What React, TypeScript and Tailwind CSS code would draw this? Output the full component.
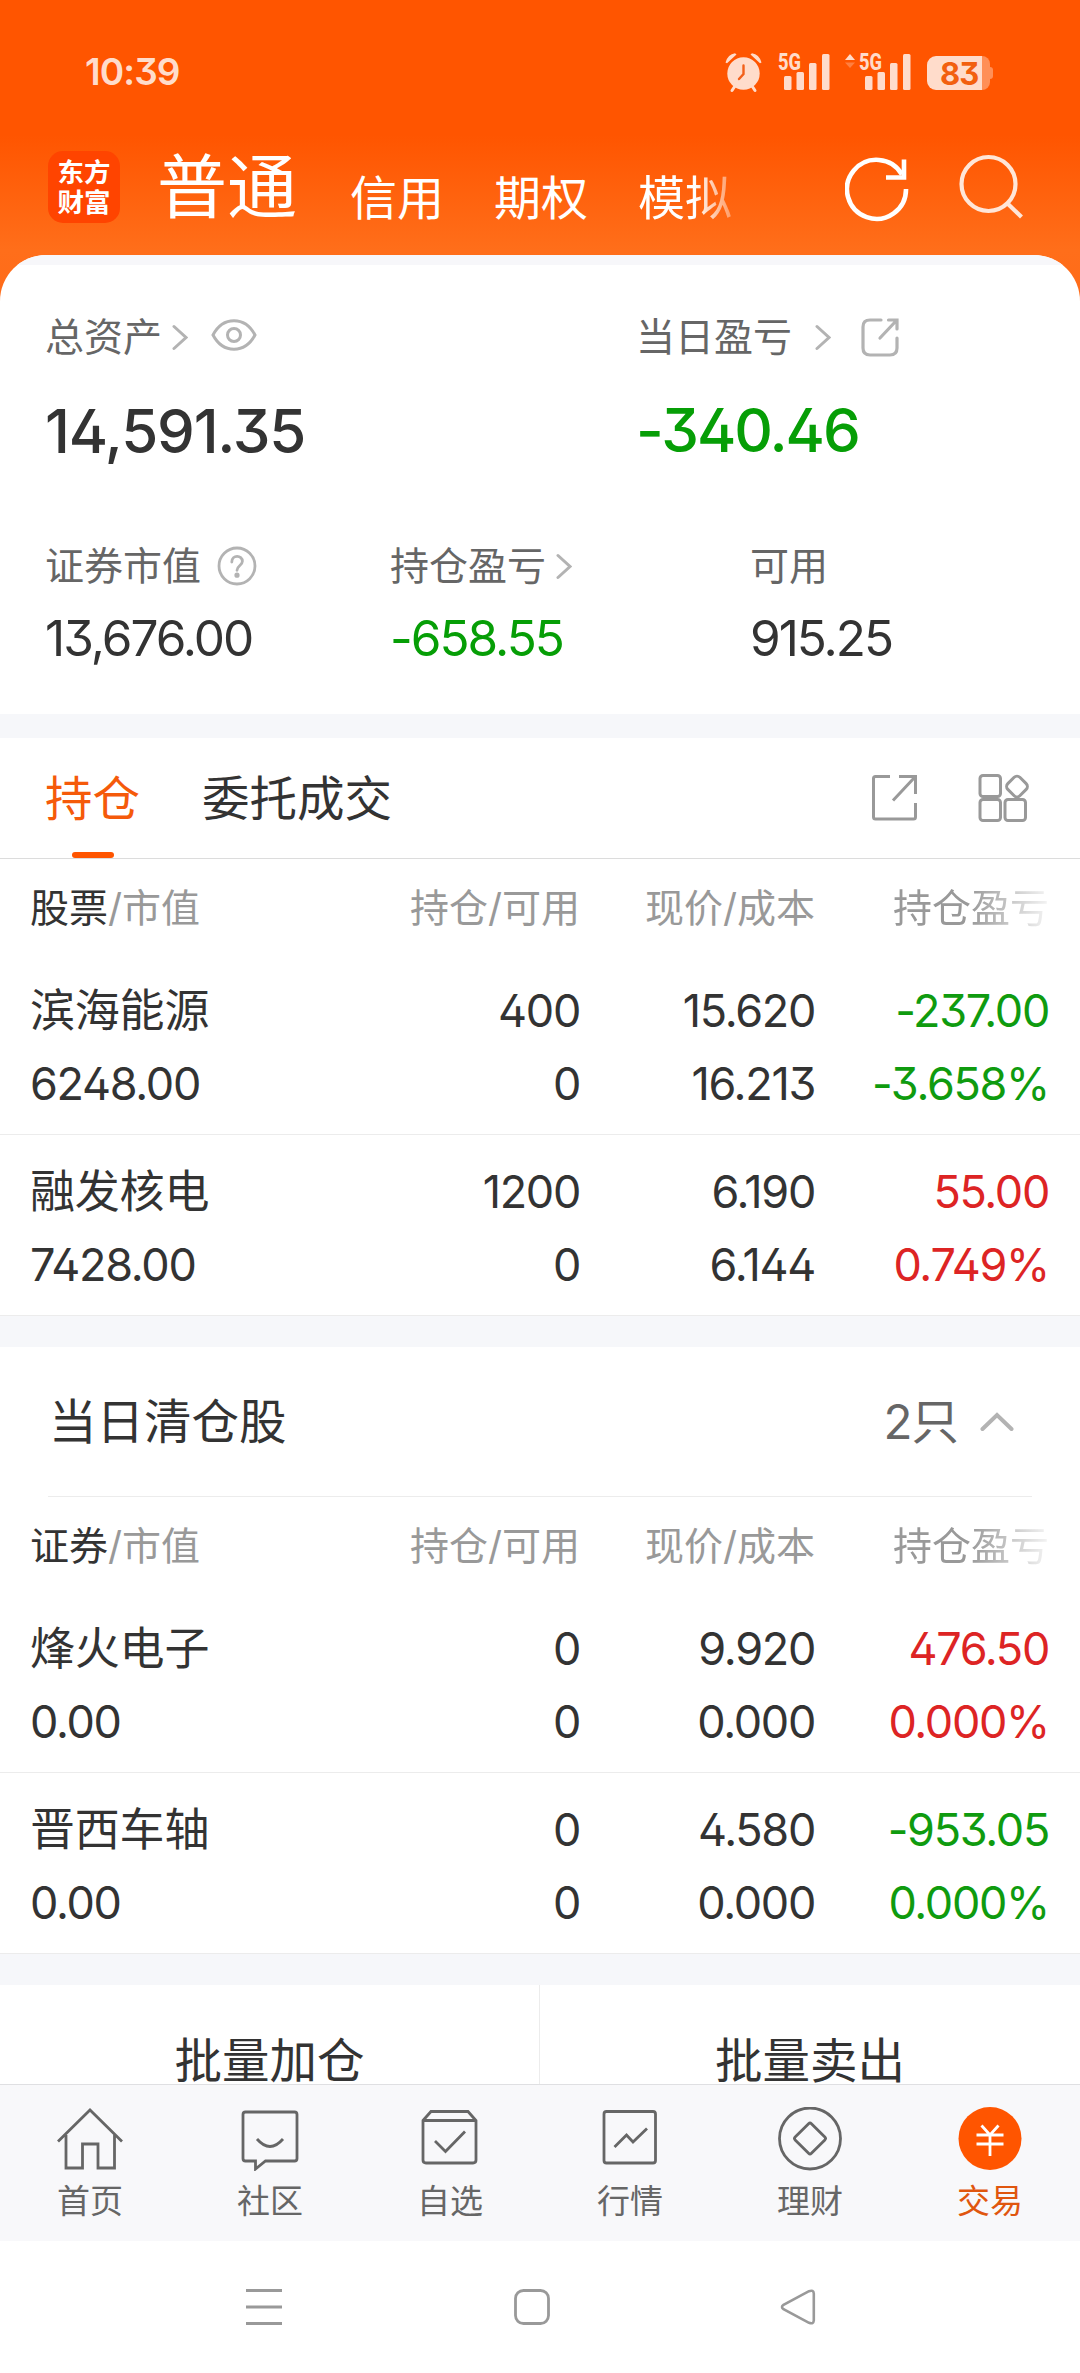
import React, { useState } from 'react';
import clsx from 'clsx';

type Tone = 'up' | 'down';

type Holding = {
  name: string;
  value: string;
  amount: string;
  available: string;
  price: string;
  cost: string;
  profit: string;
  percent: string;
  tone: Tone;
}

const holdings: Holding[] = [
  { name: '滨海能源', value: '6248.00', amount: '400', available: '0', price: '15.620', cost: '16.213', profit: '-237.00', percent: '-3.658%', tone: 'down' },
  { name: '融发核电', value: '7428.00', amount: '1200', available: '0', price: '6.190', cost: '6.144', profit: '55.00', percent: '0.749%', tone: 'up' },
];

const cleared: Holding[] = [
  { name: '烽火电子', value: '0.00', amount: '0', available: '0', price: '9.920', cost: '0.000', profit: '476.50', percent: '0.000%', tone: 'up' },
  { name: '晋西车轴', value: '0.00', amount: '0', available: '0', price: '4.580', cost: '0.000', profit: '-953.05', percent: '0.000%', tone: 'down' },
];

function Signal() {
  return (
    <svg width="52" height="40" viewBox="0 0 52 40" fill="#ffdccb">
      <text x="0" y="18.500" fontSize="23" fontWeight="800" textLength="23" lengthAdjust="spacingAndGlyphs" fontFamily="Roboto, sans-serif">5G</text>
      <rect x="6" y="25" width="7.500" height="14" rx="1.500" />
      <rect x="18.500" y="21" width="7.500" height="18" rx="1.500" />
      <rect x="31" y="12" width="7.500" height="27" rx="1.500" />
      <rect x="44" y="3" width="7.500" height="36" rx="1.500" />
    </svg>
  )
}

function StatusBar() {
  return (
    <div className="flex h-[141px] items-start pl-[85px] text-[#ffdccb]">
      <span className="mt-[51px] w-[640px] text-[37px] leading-[42px] font-semibold tracking-[-0.9px]">10:39</span>
      <svg className="mt-[53px]" width="38" height="40" viewBox="0 0 38 40" fill="#ffdccb">
        <circle cx="18.500" cy="20.500" r="16.200" />
        <path d="M0.500 9.500 Q3 1 10 0.200 L11.500 1.500 L2 10.200Z M36.500 9.500 Q34 1 27 0.200 L25.500 1.500 L35 10.200Z" />
        <path d="M7 37.500 L10 33 M30 37.500 L27 33" stroke="#ffdccb" strokeWidth="3" strokeLinecap="round" />
        <path d="M18.500 12.500 V21 L14 26" fill="none" stroke="#f2601a" strokeWidth="2.400" strokeLinecap="round" />
      </svg>
      <div className="mt-[51px] ml-[15px]"><Signal /></div>
      <svg className="mt-[53px] ml-[14px]" width="12" height="18" viewBox="0 0 12 18">
        <path d="M6 1 L11 7 H1Z" fill="#ffdccb" />
        <path d="M6 15 L11 9.500 H1Z" fill="#ff7f40" />
      </svg>
      <div className="mt-[51px] ml-[3px]"><Signal /></div>
      <div className="relative mt-14 ml-4 flex h-[34px] w-[67px]">
        <div className="h-[34px] w-[55px] rounded-l-[9px] bg-[#ffdccb]" />
        <div className="h-[34px] w-[8px] rounded-r-[8px] bg-[#ff8f57]" />
        <div className="mt-[11px] h-[12px] w-[3px] rounded-r-[3px] bg-[#ff8f57]" />
        <span className="absolute top-0 left-[13px] text-[31px] leading-[35px] font-bold tracking-[-1px] text-[#f2600f]">83</span>
      </div>
    </div>
  )
}

function TopTabs() {
  return (
    <div className="flex h-[114px] items-start pl-12 text-white">
      <div className="mt-[10px] flex h-[72px] w-[72px] flex-col items-center rounded-[15px] bg-[#ff4400] pt-[6px] text-[26.500px] leading-[30px] font-bold">
        <span>东方</span>
        <span>财富</span>
      </div>
      <span className="mt-[7px] ml-[37px] w-[193px] text-[70px] leading-[80px]">普通</span>
      <div className="mt-[32px] flex w-[440px] gap-[50px] text-[47px] leading-[50px]">
        <span>信用</span>
        <span>期权</span>
        <span className="[mask-image:linear-gradient(to_right,#000_60%,rgba(0,0,0,0.35)_100%)]">模拟</span>
      </div>
      <svg className="mt-[13px] ml-[55px]" width="66" height="68" viewBox="0 0 66 68" fill="none" stroke="#fff" strokeWidth="4.600">
        <path d="M61 35 A29.500 29.500 0 1 1 57 20.500" />
        <path d="M59 5.500 V23.500 H41" />
      </svg>
      <svg className="mt-[13px] ml-[48px]" width="64" height="68" viewBox="0 0 64 68" fill="none" stroke="#ffe6d8" strokeWidth="4.200">
        <circle cx="29.500" cy="30" r="27" />
        <path d="M48.500 49.500 L62.500 63" />
      </svg>
    </div>
  )
}

function Arrow({ className }: { className?: string }) {
  return (
    <svg className={className} width="16" height="27" viewBox="0 0 16 27" fill="none" stroke="#b3b3b3" strokeWidth="3" strokeLinecap="round">
      <path d="M2 2.500 L14 13.500 L2 24.500" />
    </svg>
  )
}

function Summary() {
  return (
    <section className="h-[459px] overflow-hidden rounded-t-[46px] bg-white">
      <div className="h-[10px] bg-[#f7f7fa]" />
      <div className="mt-[47px] ml-[45px] grid grid-cols-[591px_1fr]">
        <div>
          <div className="flex h-[50px] items-center text-[39px] text-[#666]">
            总资产
            <Arrow className="ml-[10px]" />
            <svg className="mb-[4px] ml-[23px]" width="46" height="32" viewBox="0 0 46 32" fill="none" stroke="#b3b3b3" strokeWidth="3">
              <path d="M2 16 C12 -3 34 -3 44 16 C34 35 12 35 2 16Z" />
              <circle cx="23" cy="16" r="6.500" />
            </svg>
          </div>
          <div className="mt-[39px] h-[60px] text-[60px] leading-[60px] font-medium tracking-[-1.2px] text-[#333]">14,591.35</div>
        </div>
        <div>
          <div className="flex h-[50px] items-center text-[39px] text-[#666]">
            当日盈亏
            <Arrow className="ml-[23px]" />
            <svg className="ml-[30px]" width="38" height="39" viewBox="0 0 38 39" fill="none" stroke="#b3b3b3" strokeWidth="3.200" strokeLinecap="round">
              <path d="M20 2 H9 Q2 2 2 9 V30 Q2 37 9 37 H29 Q36 37 36 30 V20" />
              <path d="M27.500 2 H36 V11 M35 3 L19 20" />
            </svg>
          </div>
          <div className="mt-[38px] h-[60px] text-[60px] leading-[60px] font-medium tracking-[-2px] text-[#069e06]">-340.46</div>
        </div>
      </div>
      <div className="mt-[79px] ml-[45px] grid grid-cols-[345px_360px_1fr] text-[39px] text-[#666]">
        <div className="flex h-[52px] items-center">
          证券市值
          <svg className="ml-[16px]" width="40" height="40" viewBox="0 0 40 40" fill="none" stroke="#b3b3b3" strokeWidth="2.800">
            <circle cx="20" cy="20" r="18" />
            <path d="M14.800 16 C14.800 8.500 25.400 8.800 25.400 15.300 C25.400 19.500 20 19.500 20 24.300" strokeLinecap="round" />
            <circle cx="20" cy="29.200" r="1.200" fill="#b3b3b3" />
          </svg>
        </div>
        <div className="flex h-[52px] items-center">
          持仓盈亏
          <Arrow className="ml-[10px]" />
        </div>
        <div className="flex h-[52px] items-center">可用</div>
      </div>
      <div className="mt-[21px] ml-[45px] grid grid-cols-[345px_360px_1fr] text-[49.500px] leading-[50px] tracking-[-2px] text-[#333]">
        <span>13,676.00</span>
        <span className="text-[#069e06]">-658.55</span>
        <span>915.25</span>
      </div>
    </section>
  )
}

function SectionTabs() {
  const [tab, setTab] = useState('持仓');

  return (
    <div className="flex h-[121px] items-center border-b border-[#dcdcdc] bg-white pl-[45px]">
      {['持仓', '委托成交'].map((label) => (
        <button
          key={label}
          onClick={() => setTab(label)}
          className={clsx(
            'relative mr-[62px] h-[120px] text-[47.500px] leading-[122px]',
            label === tab ? 'text-[#f55a0a]' : 'text-[#333]'
          )}
        >
          {label}
          {label === tab && <span className="absolute bottom-0 left-1/2 h-[6px] w-[42px] -translate-x-1/2 rounded-full bg-[#ff5500]" />}
        </button>
      ))}
      <svg className="ml-[417px]" width="48" height="48" viewBox="0 0 48 48" fill="none" stroke="#999" strokeWidth="3">
        <path d="M19 2.500 H4.500 Q2.500 2.500 2.500 4.500 V43 Q2.500 45 4.500 45 H42.500 Q44.500 45 44.500 43 V29" />
        <path d="M28 2.500 H44.500 V20 M43.500 3.500 L22 26.500" />
      </svg>
      <svg className="ml-[59px]" width="52" height="50" viewBox="0 0 52 50" fill="none" stroke="#999" strokeWidth="3">
        <rect x="2" y="2.500" width="20.500" height="21" rx="3" />
        <rect x="2" y="26.500" width="20.500" height="21" rx="3" />
        <rect x="27" y="26.500" width="20.500" height="21" rx="3" />
        <rect x="30.500" y="5" width="17" height="17" rx="4" transform="rotate(45 39 13.500)" />
      </svg>
    </div>
  )
}

function HoldingsTable({ title, rows }: { title: string, rows: Holding[] }) {
  return (
    <div className="bg-white">
      <div className="grid h-[95px] grid-cols-[300px_250px_235px_234px] items-center pt-[3px] pl-[30px] text-[39px] text-[#999]">
        <span><span className="text-[#333]">{title}</span>/市值</span>
        <span className="text-right">持仓/可用</span>
        <span className="text-right">现价/成本</span>
        <span className="text-right [mask-image:linear-gradient(to_right,#000_66%,rgba(0,0,0,0.1)_100%)]">持仓盈亏</span>
      </div>
      {rows.map((row) => (
        <div
          key={row.name}
          className="grid h-[181px] grid-cols-[300px_250px_235px_234px] grid-rows-[73px_73px] border-b border-[#ececec] pt-5 pl-[30px] text-right text-[45px] leading-[73px] tracking-[-1.3px] text-[#333]"
        >
          <span className="text-left tracking-[-0.2px]">{row.name}</span>
          <span>{row.amount}</span>
          <span>{row.price}</span>
          <span className={row.tone === 'up' ? 'text-[#dd2424]' : 'text-[#0f9b0f]'}>{row.profit}</span>
          <span className="text-left">{row.value}</span>
          <span>{row.available}</span>
          <span>{row.cost}</span>
          <span className={row.tone === 'up' ? 'text-[#dd2424]' : 'text-[#0f9b0f]'}>{row.percent}</span>
        </div>
      ))}
    </div>
  )
}

const tabIcons: { label: string, icon: React.ReactNode }[] = [
  {
    label: '首页',
    icon: <path d="M1 34.500 L33 3 L65 34.500 M9 28 V61 H25.500 V37 H41 V61 H57.500 V28" />,
  },
  {
    label: '社区',
    icon: <>
      <path d="M8.500 5 H57.500 Q60 5 60 7.500 V51.500 Q60 54 57.500 54 H28.500 L18.500 62 V54 H8.500 Q6 54 6 51.500 V7.500 Q6 5 8.500 5Z" />
      <path d="M20 32 Q33 47 46 32" />
    </>,
  },
  {
    label: '自选',
    icon: <>
      <path d="M6 13.500 L14 4.500 H51 L59 13.500 V53 Q59 56 56 56 H9 Q6 56 6 53Z M6 13.500 H59" />
      <path d="M18 34 L28.500 44.500 L48 24.500" />
    </>,
  },
  {
    label: '行情',
    icon: <>
      <rect x="7" y="4.500" width="51.500" height="51.500" rx="2.500" />
      <path d="M17.500 40 L29.500 28 L36 35 L50 21.500" />
    </>,
  },
  {
    label: '理财',
    icon: <>
      <circle cx="33" cy="31.500" r="30.500" />
      <rect x="21.500" y="20" width="23" height="23" rx="2" transform="rotate(45 33 31.500)" />
    </>,
  },
  {
    label: '交易',
    icon: <>
      <circle cx="33" cy="31.500" r="31.500" fill="#ff5500" stroke="none" />
      <path d="M24.500 18.500 L33 28 L41.500 18.500 M33 28 V49 M19.500 28 H46.500 M19.500 37 H46.500" stroke="#fff" />
    </>,
  },
];

function TabBar() {
  return (
    <nav className="grid h-[157px] grid-cols-6 border-t border-[#dfdfe2] bg-[#f8f8fa]">
      {tabIcons.map(({ label, icon }) => (
        <div key={label} className={clsx('flex flex-col items-center pt-[22px] text-[33px] leading-[40px]', label === '交易' ? 'text-[#e0560e]' : 'text-[#666]')}>
          <svg width="66" height="64" viewBox="0 0 66 64" fill="none" stroke="#666" strokeWidth="2.800">{icon}</svg>
          <span className="mt-[10px]">{label}</span>
        </div>
      ))}
    </nav>
  )
}

function SystemNav() {
  return (
    <div className="flex h-[132px] items-center bg-white pl-[246px]">
      <svg width="36" height="38" viewBox="0 0 36 38" stroke="#999" strokeWidth="3">
        <path d="M0 2.500 H36 M0 19 H36 M0 35.500 H36" />
      </svg>
      <svg className="ml-[231px]" width="38" height="38" viewBox="0 0 38 38" fill="none" stroke="#999" strokeWidth="2.800">
        <rect x="2.500" y="2.500" width="33" height="33" rx="8" />
      </svg>
      <svg className="ml-[229px]" width="36" height="38" viewBox="0 0 36 38" fill="none" stroke="#999" strokeWidth="2.600">
        <path d="M3.500 16.800 Q0.500 19 3.500 21.200 L29 34.800 Q33.500 36.500 33.800 32.500 V5.500 Q33.500 1.500 29 3.200Z" />
      </svg>
    </div>
  )
}

export default function App() {
  return (
    <main lang="zh-CN" className="flex h-[2373px] w-[1080px] flex-col overflow-hidden bg-[#f6f7fa] font-['Inter','Noto_Sans_CJK_SC',sans-serif] [font-feature-settings:'cv02','cv09']">
      <div className="bg-[linear-gradient(to_bottom,#ff5500_0px,#ff5500_135px,#ff6e1a_250px,#ff6a18_320px)]">
        <StatusBar />
        <TopTabs />
        <Summary />
      </div>
      <div className="mt-6">
        <SectionTabs />
        <HoldingsTable title="股票" rows={holdings} />
      </div>
      <div className="mt-[31px] bg-white">
        <div className="mx-12 flex h-[150px] items-center border-b border-[#ececec] pl-[1px] text-[47.500px] text-[#333]">
          <span className="grow">当日清仓股</span>
          <span className="tracking-[-1px] text-[#666]">2只</span>
          <svg className="mr-[18px] ml-[22px]" width="34" height="20" viewBox="0 0 34 20" fill="none" stroke="#b3b3b3" strokeWidth="4" strokeLinecap="round">
            <path d="M2.500 17 L17 3 L31.500 17" />
          </svg>
        </div>
        <HoldingsTable title="证券" rows={cleared} />
      </div>
      {/* quick actions, running into the tab bar */}
      <div className="mt-[31px] grid h-[99px] shrink-0 grid-cols-2 bg-white text-[47.500px] leading-[46px] text-[#333]">
        <span className="border-r border-[#ececec] pt-[53px] text-center">批量加仓</span>
        <span className="pt-[53px] text-center">批量卖出</span>
      </div>
      <TabBar />
      <SystemNav />
    </main>
  );
}
